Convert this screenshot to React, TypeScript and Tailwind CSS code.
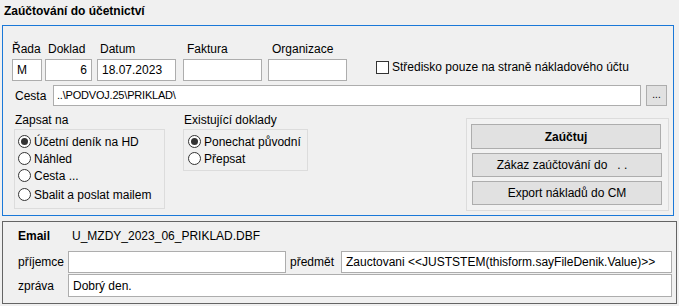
import React from 'react'

function Radio({ label, checked = false, className = '' }: { label: string; checked?: boolean; className?: string }) {
  return (
    <div className={`flex items-center gap-[3px] h-[17px] ${className}`}>
      <span className='w-[13px] h-[13px] rounded-full border border-[#333333] bg-white flex items-center justify-center'>
        {checked && <span className='w-[7px] h-[7px] rounded-full bg-[#333333]' />}
      </span>
      <span>{label}</span>
    </div>
  )
}

function Field({ label, width, value = '', right = false, labelPad = 'pl-[3px]' }: {
  label: string; width: string; value?: string; right?: boolean; labelPad?: string
}) {
  return (
    <div className='flex flex-col'>
      <span className={`h-[14px] leading-[14px] ${labelPad}`}>{label}</span>
      <div className={`mt-[3px] h-[22px] ${width} bg-white border border-[#adadad] flex items-center px-[4px] ${right ? 'justify-end' : ''}`}>
        {value}
      </div>
    </div>
  )
}

function Btn({ children, bold = false, className = '' }: { children: React.ReactNode; bold?: boolean; className?: string }) {
  return (
    <div className={`w-[190px] bg-[#e1e1e1] border border-[#adadad] flex items-center justify-center whitespace-pre ${bold ? 'font-bold' : ''} ${className}`}>
      {children}
    </div>
  )
}

export default function App() {
  return (
    <div className="w-[679px] h-[306px] bg-[#f0f0f0] font-['Liberation_Sans',Arial,sans-serif] text-[12px] text-black overflow-hidden">
      <div className='h-[25px] pl-[4px] pt-[4px] font-bold leading-[14px]'>Zaúčtování do účetnictví</div>

      {/* horni panel */}
      <div className='ml-[2px] w-[672px] h-[191px] border border-[#1a78d8]'>
        <div className='flex items-end pl-[9px] pt-[16px]'>
          <Field label='Řada' width='w-[30px]' value='M' labelPad='pl-0' />
          <div className='ml-[3px]'><Field label='Doklad' width='w-[47px]' value='6' right /></div>
          <div className='ml-[5px]'><Field label='Datum' width='w-[79px]' value='18.07.2023' /></div>
          <div className='ml-[7px]'><Field label='Faktura' width='w-[79px]' labelPad='pl-[4px]' /></div>
          <div className='ml-[6px]'><Field label='Organizace' width='w-[79px]' labelPad='pl-[4px]' /></div>
          <label className='ml-[29px] mb-[5px] flex items-center gap-[3px]'>
            <span className='w-[13px] h-[13px] border border-[#333333] bg-white' />
            <span>Středisko pouze na straně nákladového účtu</span>
          </label>
        </div>

        <div className='flex items-center mt-[4px] pl-[12px]'>
          <span className='w-[38px]'>Cesta</span>
          <div className='w-[588px] h-[21px] bg-white border border-[#adadad] flex items-center px-[3px] text-[11px] tracking-[-0.2px]'>
            ..\PODVOJ.25\PRIKLAD\
          </div>
          <div className='ml-[5px] w-[21px] h-[21px] bg-[#e1e1e1] border border-[#adadad] flex items-center justify-center text-[10px] pb-[3px]'>...</div>
        </div>

        <div className='flex items-start mt-[7px]'>
          <div className='ml-[11px] flex flex-col'>
            <span className='h-[14px] leading-[14px] pl-[1px]'>Zapsat na</span>
            <div className='mt-[2px] w-[151px] h-[80px] border border-[#dcdcdc] pl-[3px] pt-[3px]'>
              <Radio label='Účetní deník na HD' checked />
              <Radio label='Náhled' />
              <Radio label='Cesta ...' />
              <Radio label='Sbalit a poslat mailem' className='mt-[2px]' />
            </div>
          </div>
          <div className='ml-[18px] flex flex-col'>
            <span className='h-[14px] leading-[14px] pl-[1px]'>Existující doklady</span>
            <div className='mt-[2px] w-[125px] h-[42px] border border-[#dcdcdc] pl-[4px] pt-[3px]'>
              <Radio label='Ponechat původní' checked />
              <Radio label='Přepsat' />
            </div>
          </div>
          <div className='ml-[158px] mt-[5px] w-[203px] h-[93px] border border-[#dcdcdc] bg-[#f2f2f2] pl-[4px] pt-[5px] flex flex-col'>
            <Btn bold className='h-[25px]'>Zaúčtuj</Btn>
            <Btn className='h-[24px] mt-[4px] ml-[1px] pr-[10px]'>{'Zákaz zaúčtování do   . .'}</Btn>
            <Btn className='h-[24px] mt-[4px] ml-[1px]'>Export nákladů do CM</Btn>
          </div>
        </div>
      </div>

      {/* email */}
      <div className='ml-[2px] mt-[5px] w-[675px] h-[83px] border border-[#646464] pl-[15px] pt-[7px]'>
        <div className='flex h-[14px] leading-[14px]'>
          <span className='w-[54px] font-bold'>Email</span>
          <span>U_MZDY_2023_06_PRIKLAD.DBF</span>
        </div>
        <div className='flex items-center mt-[8px]'>
          <span className='w-[50px]'>příjemce</span>
          <div className='w-[218px] h-[22px] bg-white border border-[#adadad]' />
          <span className='ml-[4px] w-[51px]'>předmět</span>
          <div className='w-[331px] h-[22px] bg-white border border-[#adadad] flex items-center px-[4px] whitespace-nowrap'>
            {'Zauctovani <<JUSTSTEM(thisform.sayFileDenik.Value)>>'}
          </div>
        </div>
        <div className='flex items-center mt-[1px]'>
          <span className='w-[50px]'>zpráva</span>
          <div className='w-[604px] h-[23px] bg-white border border-[#adadad] flex items-center px-[4px]'>Dobrý den.</div>
        </div>
      </div>
    </div>
  )
}
